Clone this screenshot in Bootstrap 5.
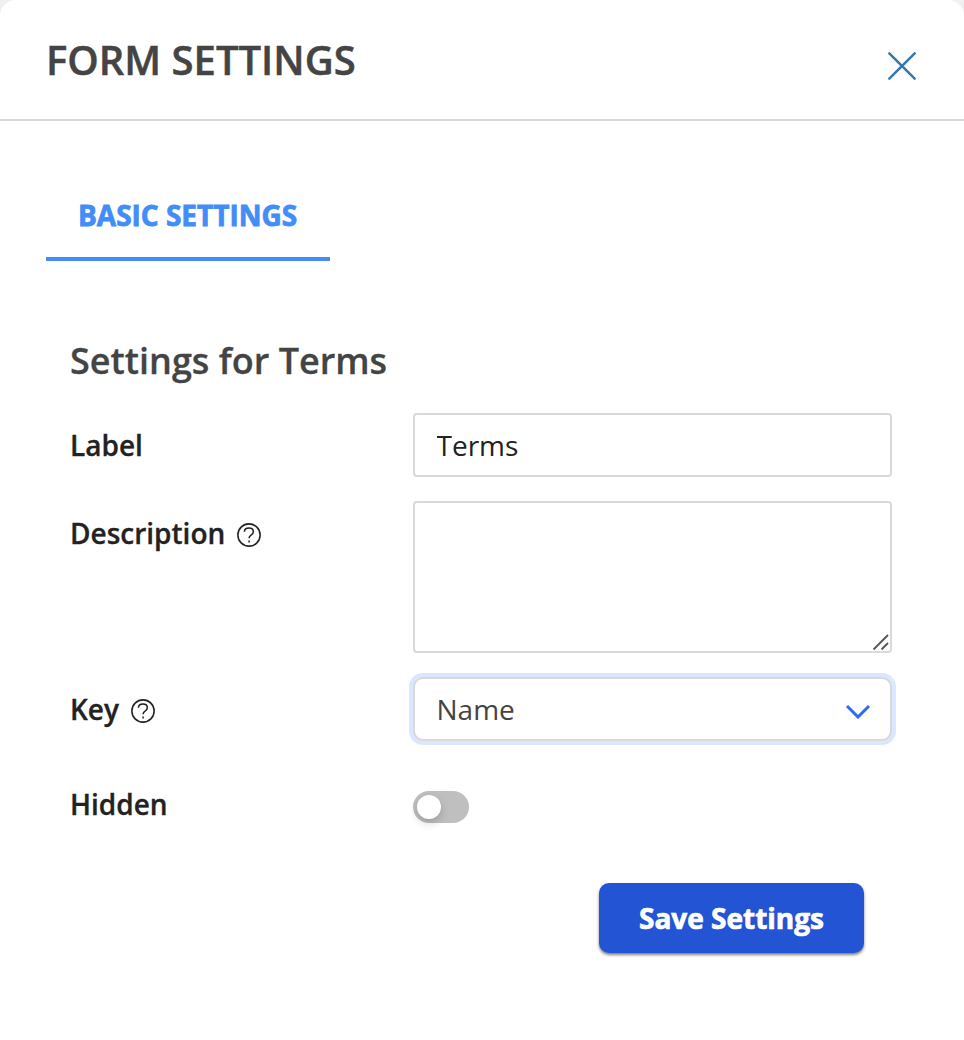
<!DOCTYPE html>
<html lang="en">
<head>
<meta charset="utf-8">
<meta name="viewport" content="width=device-width, initial-scale=1">
<title>Form Settings</title>
<link href="https://cdn.jsdelivr.net/npm/bootstrap@5.3.0/dist/css/bootstrap.min.css" rel="stylesheet">
<style>
  body { font-family: "Open Sans", sans-serif; font-size: 28px; line-height: 38px; color: #222; background: #f0f0f0; }
  .panel { height: 1040px; border-radius: 16px 16px 0 0; overflow: hidden; }
  .panel-head { height: 121px; border-bottom: 2px solid #d9d9d9; padding: 0 46px; }
  .panel-title { font-size: 40px; line-height: 54px; font-weight: 600; color: #444; margin-top: 1px; -webkit-text-stroke: .5px; }
  .close-btn { margin-top: 12px; line-height: 0; }
  .tabs-wrap { padding: 50px 46px 0; }
  .tabs-wrap .nav-link { width: 284px; height: 90px; padding: 25px 0 0 32px; color: #428df8; font-weight: 700; line-height: 38px; border-bottom: 4px solid #428df8; white-space: nowrap; -webkit-text-stroke: .8px; }
  .settings { padding: 75px 72px 0 70px; }
  .section-title { font-size: 36px; line-height: 50px; font-weight: 600; color: #444; margin-bottom: 27px; -webkit-text-stroke: .3px; }
  .field { display: grid; grid-template-columns: 343px 479px; margin-bottom: 24px; }
  .field-label { font-weight: 600; padding-top: 13px; gap: 12px; -webkit-text-stroke: .3px; }
  .switch-label { padding-top: 20px; }
  .field .form-control, .field .form-select { height: 64px; padding: 0 21.5px; font-size: 28px; line-height: 38px; border: 2px solid #d9d9d9; border-radius: 4px; color: #222; background-color: #fff; }
  .field textarea.form-control { height: 152px; resize: none; display: block; }
  .field .form-select { color: #444; border-radius: 10px; box-shadow: 0 0 0 4px #d9e7ff; background-image: none; }
  .help { margin: 9px 0 0 -.5px; }
  .grip { position: absolute; right: 2px; bottom: 2px; }
  .chevron { position: absolute; right: 21px; top: 26px; pointer-events: none; }
  .field .form-check-input { width: 56px; height: 32px; margin: 26px 0 0; border: 0; border-radius: 16px; background: #bfbfbf; position: relative; display: block; appearance: none; }
  .field .form-check-input::before { content: ""; position: absolute; left: 4px; top: 4px; width: 24px; height: 24px; border-radius: 50%; background: #fff; box-shadow: 0 4px 8px rgba(0,35,11,.2); }
  .save-btn { width: 265px; height: 70px; margin: 60px 28px 0 0; padding: 0; border: 0; border-radius: 10px; background: #2254d4; color: #fff; font-size: 28px; font-weight: 700; box-shadow: 0 2px 3px rgba(0,0,0,.5); -webkit-text-stroke: .7px; }
  svg { display: block; flex: none; }
</style>
</head>
<body>
<main class="panel bg-white">
  <header class="panel-head d-flex justify-content-between align-items-center">
    <h1 class="panel-title mb-0">FORM SETTINGS</h1>
    <button class="close-btn btn p-0 border-0" type="button" aria-label="Close">
      <svg width="32" height="32" viewBox="0 0 32 32" fill="none" stroke="#3777ad" stroke-width="2.5" stroke-linecap="round"><path d="M3.300 3.300 28.700 28.700M28.700 3.300 3.300 28.700"/></svg>
    </button>
  </header>
  <nav class="tabs-wrap nav"><a class="nav-link active" href="#">BASIC SETTINGS</a></nav>
  <form class="settings">
    <h2 class="section-title">Settings for Terms</h2>
    <div class="field">
      <label class="field-label" for="label">Label</label>
      <input id="label" class="form-control" type="text" value="Terms">
    </div>
    <div class="field">
      <label class="field-label d-flex" for="description">Description
        <svg class="help" width="24" height="24" viewBox="0 0 25 25" fill="none" stroke="#222" stroke-width="1.6"><circle cx="12.5" cy="12.5" r="11.600"/><path d="M7.700 9.200C7.800 6.700 9.700 5.300 12.400 5.300c2.600 0 4.600 1.500 4.600 3.700 0 1.800-1 2.600-2.400 3.600-1.400.9-2 1.700-2 3.400"/><path d="M12.600 18.200v2"/></svg>
      </label>
      <div class="position-relative">
        <textarea id="description" class="form-control"></textarea>
        <svg class="grip" width="18" height="18" viewBox="0 0 18 18" fill="none" stroke="#555" stroke-width="1.8"><path d="M1.500 16.500 16 2M9.500 16.500l6.500-6.500"/></svg>
      </div>
    </div>
    <div class="field">
      <label class="field-label d-flex" for="key">Key
        <svg class="help" width="24" height="24" viewBox="0 0 25 25" fill="none" stroke="#222" stroke-width="1.6"><circle cx="12.5" cy="12.5" r="11.600"/><path d="M7.700 9.200C7.800 6.700 9.700 5.300 12.400 5.300c2.600 0 4.600 1.500 4.600 3.700 0 1.800-1 2.600-2.400 3.600-1.400.9-2 1.700-2 3.400"/><path d="M12.600 18.200v2"/></svg>
      </label>
      <div class="position-relative">
        <select id="key" class="form-select"><option>Name</option></select>
        <svg class="chevron" width="26" height="16" viewBox="0 0 26 16" fill="none" stroke="#2e6bf0" stroke-width="3"><path d="m2 3 11 11L24 3"/></svg>
      </div>
    </div>
    <div class="field mb-0">
      <label class="field-label switch-label" for="hidden">Hidden</label>
      <input id="hidden" class="form-check-input" type="checkbox" role="switch">
    </div>
    <div class="d-flex justify-content-end"><button class="save-btn btn" type="button">Save Settings</button></div>
  </form>
</main>
<script src="https://cdn.jsdelivr.net/npm/bootstrap@5.3.0/dist/js/bootstrap.bundle.min.js"></script>
</body>
</html>
